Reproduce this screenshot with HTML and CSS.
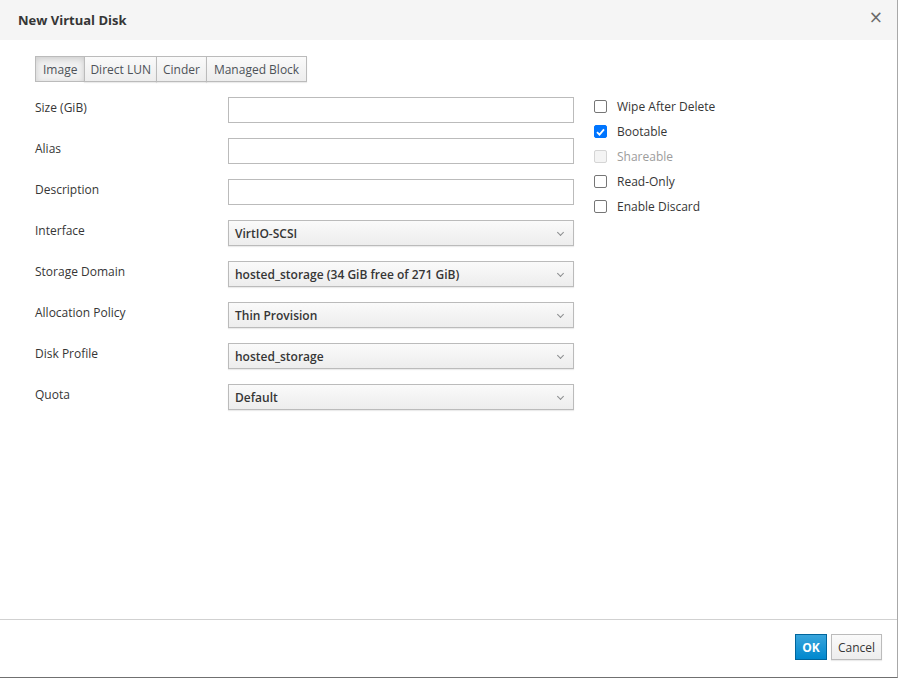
FILE: index.html
```html
<!DOCTYPE html>
<html lang="en">
<head>
    <meta charset="UTF-8">
    <title>New Virtual Disk</title>
    <link rel="stylesheet" href="styles.css">
</head>
<body>
    <div class="dialogo">
        <div class="cabecera">
            <h1>New Virtual Disk</h1>
            <button class="cerrar">&times;</button>
        </div>
        <div class="cuerpo">
            <div class="pestanas">
                <button class="activa ancha">Image</button>
                <button>Direct LUN</button>
                <button class="media">Cinder</button>
                <button class="ancha">Managed Block</button>
            </div>
            <div class="formulario">
                <div class="campos">
                    <label>Size (GiB)</label>
                    <input type="text">
                    <label>Alias</label>
                    <input type="text">
                    <label>Description</label>
                    <input type="text">
                    <label>Interface</label>
                    <div class="selector">VirtIO-SCSI</div>
                    <label>Storage Domain</label>
                    <div class="selector">hosted_storage (34 GiB free of 271 GiB)</div>
                    <label>Allocation Policy</label>
                    <div class="selector">Thin Provision</div>
                    <label>Disk Profile</label>
                    <div class="selector">hosted_storage</div>
                    <label>Quota</label>
                    <div class="selector">Default</div>
                </div>
                <div class="opciones">
                    <label class="opcion"><span class="caja"></span>Wipe After Delete</label>
                    <label class="opcion"><span class="caja marcada"><svg width="9" height="8" viewBox="0 0 9 8"><path d="M1 4.2 L3.5 6.6 L8 1.4" fill="none" stroke="#fff" stroke-width="1.8"/></svg></span>Bootable</label>
                    <label class="opcion deshabilitada"><span class="caja"></span>Shareable</label>
                    <label class="opcion"><span class="caja"></span>Read-Only</label>
                    <label class="opcion"><span class="caja"></span>Enable Discard</label>
                </div>
            </div>
        </div>
        <div class="pie">
            <button class="ok">OK</button>
            <button class="cancelar">Cancel</button>
        </div>
    </div>
</body>
</html>
```
FILE: styles.css
```css
body {
    margin: 0;
    font-family: "Open Sans", sans-serif;
    font-size: 12px;
    color: #363636;
    background-color: #fff;
}
.dialogo {
    width: 897px;
    height: 677px;
    border-right: 1px solid #a8a8a8;
    border-bottom: 1px solid #707070;
    display: flex;
    flex-direction: column;
}
.cabecera {
    height: 40px;
    flex-shrink: 0;
    background-color: #f5f5f5;
    display: flex;
    align-items: center;
    justify-content: space-between;
    padding: 0 14px 0 18px;
}
.cabecera h1 {
    margin: 0;
    font-size: 13px;
    font-weight: 700;
    color: #363636;
}
.cerrar {
    border: none;
    background: none;
    font-family: "DejaVu Sans", sans-serif;
    font-size: 17px;
    color: #6a6a6a;
    padding: 0;
    margin-top: -6px;
    cursor: pointer;
}
.cuerpo {
    flex: 1;
    padding: 16px 35px 0 35px;
}
.pestanas {
    display: flex;
}
.pestanas button {
    font-family: "Open Sans", sans-serif;
    font-size: 12px;
    color: #4d5258;
    height: 26px;
    padding: 0 5px;
    border: 1px solid #bbb;
    margin-left: -1px;
    background: linear-gradient(#fafafa, #ededed);
    box-shadow: 0 1px 1px rgba(3,3,3,0.08);
    cursor: pointer;
}
.pestanas button:first-child {
    margin-left: 0;
}
.pestanas .media {
    padding: 0 6px;
}
.pestanas .ancha {
    padding: 0 7px;
}
.pestanas .activa {
    background: #f0f0f0;
    box-shadow: inset 0 2px 6px rgba(3,3,3,0.15);
}
.formulario {
    display: flex;
    margin-top: 15px;
}
.campos {
    display: grid;
    grid-template-columns: 193px 346px;
    row-gap: 15px;
}
.campos label {
    padding-top: 2px;
    line-height: 18px;
}
.campos input {
    box-sizing: border-box;
    height: 26px;
    border: 1px solid #bbb;
    font-family: "Open Sans", sans-serif;
    font-size: 12px;
    margin: 0;
}
.selector {
    box-sizing: border-box;
    height: 26px;
    border: 1px solid #bbb;
    background: linear-gradient(#fafafa, #ededed);
    box-shadow: 0 1px 1px rgba(3,3,3,0.08);
    font-weight: 600;
    color: #363636;
    padding: 0 6px;
    line-height: 25px;
    position: relative;
}
.selector::after {
    content: "";
    position: absolute;
    right: 10px;
    top: 9px;
    width: 4px;
    height: 4px;
    border-right: 1px solid #8b8d8f;
    border-bottom: 1px solid #8b8d8f;
    transform: rotate(45deg);
}
.opciones {
    margin-left: 20px;
    margin-top: -3px;
    display: flex;
    flex-direction: column;
}
.opcion {
    display: flex;
    align-items: center;
    height: 25px;
    line-height: 18px;
}
.caja {
    box-sizing: border-box;
    width: 13px;
    height: 13px;
    border: 1px solid #767676;
    border-radius: 2px;
    background-color: #fff;
    margin-right: 10px;
    display: flex;
    align-items: center;
    justify-content: center;
}
.caja.marcada {
    background-color: #0075ff;
    border-color: #0075ff;
}
.deshabilitada {
    color: #9c9c9c;
}
.deshabilitada .caja {
    border-color: #d5d5d5;
    background-color: #f4f4f4;
}
.pie {
    box-sizing: border-box;
    height: 58px;
    flex-shrink: 0;
    border-top: 1px solid #d1d1d1;
    display: flex;
    justify-content: flex-end;
    align-items: flex-start;
    padding: 14px 15px 0 0;
    gap: 4px;
}
.pie button {
    font-family: "Open Sans", sans-serif;
    font-size: 12px;
    height: 26px;
    padding: 0 6px;
    cursor: pointer;
}
.ok {
    background: linear-gradient(#39a5dc, #0088ce);
    border: 1px solid #00659c;
    color: #fff;
    font-weight: 700;
    width: 32px;
}
.cancelar {
    background: linear-gradient(#fafafa, #ededed);
    border: 1px solid #bbb;
    color: #363636;
    box-shadow: 0 1px 1px rgba(3,3,3,0.08);
    width: 51px;
}
```
